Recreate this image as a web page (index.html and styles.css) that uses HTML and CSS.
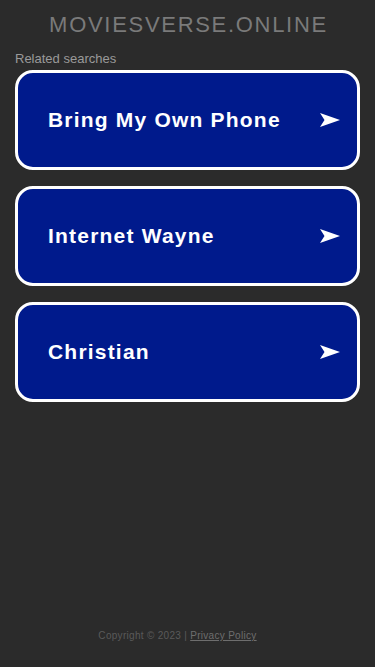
FILE: index.html
```html
<!DOCTYPE html>
<html lang="en">
  <head>
    <meta charset="UTF-8" />
    <meta name="viewport" content="width=device-width, initial-scale=1.0" />
    <title>moviesverse.online</title>
    <link rel="stylesheet" href="styles.css">
  </head>
  <body>
    <div class="page">
      <header class="header">
        <div class="domain">MOVIESVERSE.ONLINE</div>
      </header>
      <main class="content">
        <div class="label">Related searches</div>
        <div class="links">
          <a class="link" href="#">
            <span>Bring My Own Phone</span>
            <svg class="arrow" viewBox="0 0 20 14" width="20" height="14"><path d="M0 0 L20 7 L0 14 L4.5 7 Z" fill="#fff"/></svg>
          </a>
          <a class="link" href="#">
            <span>Internet Wayne</span>
            <svg class="arrow" viewBox="0 0 20 14" width="20" height="14"><path d="M0 0 L20 7 L0 14 L4.5 7 Z" fill="#fff"/></svg>
          </a>
          <a class="link" href="#">
            <span>Christian</span>
            <svg class="arrow" viewBox="0 0 20 14" width="20" height="14"><path d="M0 0 L20 7 L0 14 L4.5 7 Z" fill="#fff"/></svg>
          </a>
        </div>
      </main>
      <footer class="footer">
        Copyright © 2023 | <a href="#">Privacy Policy</a>
      </footer>
    </div>
  </body>
</html>
```

FILE: styles.css
```css
body {
  margin: 0;
  font-family: "Liberation Sans", Arial, sans-serif;
  background-color: #2b2b2b;
}

.page {
  display: flex;
  flex-direction: column;
  min-height: 667px;
}

.header {
  text-align: center;
  padding-top: 12px;
}

.domain {
  font-size: 22px;
  line-height: 25px;
  letter-spacing: 1.7px;
  padding-left: 2px;
  color: #7a7a7a;
}

.content {
  padding: 0 15px;
  flex: 1;
}

.label {
  font-size: 13px;
  color: #9a9a9a;
  margin-top: 14px;
  line-height: 16px;
}

.links {
  display: flex;
  flex-direction: column;
  gap: 16px;
  margin-top: 3px;
}

.link {
  display: flex;
  align-items: center;
  justify-content: space-between;
  height: 94px;
  padding: 0 17px 0 30px;
  border: 3px solid #fff;
  border-radius: 18px;
  background: #001a8c;
  color: #fff;
  font-size: 21px;
  letter-spacing: 1.2px;
  font-weight: bold;
  text-decoration: none;
}

.footer {
  text-align: center;
  font-size: 10px;
  letter-spacing: 0.3px;
  color: #5a5a5a;
  padding: 0 20px 26px 0;
}

.footer a {
  color: #6e6e6e;
}
```
